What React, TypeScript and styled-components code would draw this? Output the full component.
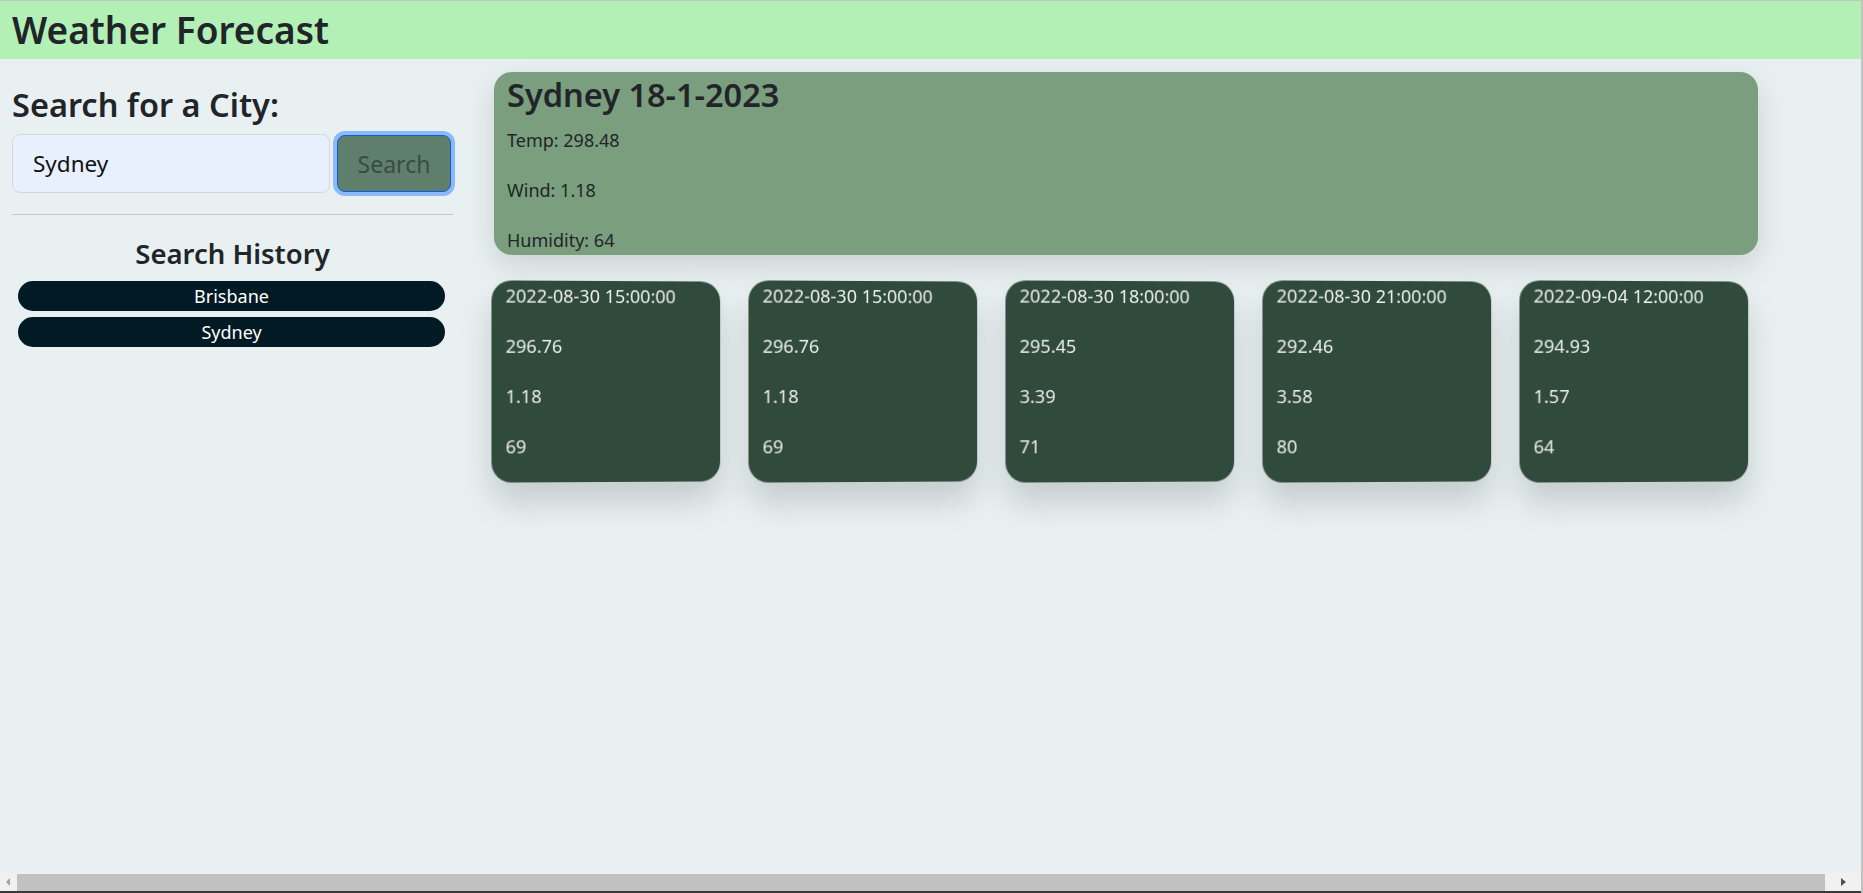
import React from "react";
import styled, { createGlobalStyle } from "styled-components";

const GlobalStyle = createGlobalStyle`
  * { box-sizing: border-box; }
  html, body { margin: 0; padding: 0; }
  body {
    background: #e8f0f1;
    font-family: "Noto Sans", "Open Sans", sans-serif;
    color: #212529;
    overflow: hidden;
  }
`;

const Page = styled.div`
  height: 893px;
  border-top: 1px solid #c4c4c4;
  border-right: 2px solid #c2c2c2;
  position: relative;
`;

const Header = styled.header`
  background: #b2f0b5;
  height: 58px;
  display: flex;
  align-items: center;
  padding-left: 12px;
`;

const Title = styled.h1`
  margin: 0;
  font-size: 37px;
  font-weight: 600;
  line-height: 1.2;
  color: #212529;
`;

const Row = styled.div`
  display: flex;
  align-items: flex-start;
  padding: 0 12px;
`;

const Sidebar = styled.aside`
  width: 441px;
  flex: none;
  display: flex;
  flex-direction: column;
`;

const SearchLabel = styled.h2`
  margin: 27px 0 10px;
  font-size: 32.5px;
  font-weight: 600;
  line-height: 38px;
`;

const SearchForm = styled.form`
  display: flex;
  align-items: center;
  gap: 7px;
`;

const CityInput = styled.input`
  width: 318px;
  height: 59px;
  border: 1px solid #d3d8dd;
  border-radius: 8px;
  background: #e8f0fe;
  padding: 0 20px;
  font-family: inherit;
  font-size: 22.5px;
  color: #111;
  outline: none;
`;

const SearchButton = styled.button`
  width: 114px;
  height: 57px;
  border: 1px solid #0b5ed7;
  border-radius: 8px;
  background: #5f7f6c;
  box-shadow: 0 0 0 4px #8cb9f7;
  color: #394b48;
  font-family: inherit;
  font-size: 23px;
  padding: 0;
`;

const Divider = styled.hr`
  width: 100%;
  margin: 21px 0 0;
  border: 0;
  border-top: 1px solid #c2c7c9;
`;

const HistoryTitle = styled.h3`
  margin: 22px 0 11px;
  text-align: center;
  font-size: 27.5px;
  font-weight: 600;
  line-height: 33px;
`;

const HistoryList = styled.div`
  display: flex;
  flex-direction: column;
  gap: 6px;
  padding: 0 8px 0 6px;
`;

const HistoryButton = styled.button`
  height: 30px;
  border: 0;
  border-radius: 15px;
  background: #011a24;
  color: #ffffff;
  font-family: inherit;
  font-size: 18px;
  line-height: 30px;
  padding: 0;
`;

const Main = styled.main`
  margin-left: 41px;
  padding-top: 13px;
  display: flex;
  flex-direction: column;
`;

const CurrentCard = styled.section`
  width: 1264px;
  border-radius: 18px;
  background: #7a9e7e;
  padding: 0 13px;
  box-shadow: 0 10px 30px rgba(0, 0, 0, 0.13);
`;

const CityHeading = styled.h2`
  margin: 4px 0 12px;
  font-size: 32.5px;
  font-weight: 600;
  line-height: 38px;
`;

const Stat = styled.p<{ $light?: boolean }>`
  margin: 0 0 21px;
  font-size: 18px;
  line-height: 29px;
  color: ${(p) => (p.$light ? "#eceeec" : "#212529")};
  &:last-child {
    margin-bottom: ${(p) => (p.$light ? "21px" : "0")};
  }
`;

const ForecastRow = styled.div`
  display: flex;
  gap: 28px;
  margin-top: 26px;
  margin-left: -2px;
`;

const ForecastCard = styled.article`
  width: 229px;
  border-radius: 20px;
  background: #304a3c;
  padding: 1px 14px 0;
  box-shadow: 0 20px 32px rgba(0, 0, 0, 0.15);
  transform: perspective(1000px) rotateY(3deg);
`;

const ScrollBar = styled.div`
  position: fixed;
  left: 0;
  right: 2px;
  bottom: 0;
  height: 20px;
  background: #f1f1f1;
  border-bottom: 2px solid #3a3a3a;
  display: flex;
  align-items: stretch;
`;

const ScrollArrow = styled.div<{ $wide?: boolean }>`
  width: ${(p) => (p.$wide ? "36px" : "17px")};
  flex: none;
  display: flex;
  align-items: center;
  justify-content: center;
`;

const ScrollThumb = styled.div`
  flex: 1;
  background: #c1c1c1;
  margin: 1px 0 0;
`;

const forecasts = [
  { date: "2022-08-30 15:00:00", temp: "296.76", wind: "1.18", hum: "69" },
  { date: "2022-08-30 15:00:00", temp: "296.76", wind: "1.18", hum: "69" },
  { date: "2022-08-30 18:00:00", temp: "295.45", wind: "3.39", hum: "71" },
  { date: "2022-08-30 21:00:00", temp: "292.46", wind: "3.58", hum: "80" },
  { date: "2022-09-04 12:00:00", temp: "294.93", wind: "1.57", hum: "64" },
];

export default function App() {
  return (
    <>
      <GlobalStyle />
      <Page>
        <Header>
          <Title>Weather Forecast</Title>
        </Header>
        <Row>
          <Sidebar>
            <SearchLabel>Search for a City:</SearchLabel>
            <SearchForm onSubmit={(e) => e.preventDefault()}>
              <CityInput defaultValue="Sydney" />
              <SearchButton type="submit">Search</SearchButton>
            </SearchForm>
            <Divider />
            <HistoryTitle>Search History</HistoryTitle>
            <HistoryList>
              <HistoryButton>Brisbane</HistoryButton>
              <HistoryButton>Sydney</HistoryButton>
            </HistoryList>
          </Sidebar>
          <Main>
            <CurrentCard>
              <CityHeading>Sydney 18-1-2023</CityHeading>
              <Stat>Temp: 298.48</Stat>
              <Stat>Wind: 1.18</Stat>
              <Stat>Humidity: 64</Stat>
            </CurrentCard>
            <ForecastRow>
              {forecasts.map((f, i) => (
                <ForecastCard key={i}>
                  <Stat $light>{f.date}</Stat>
                  <Stat $light>{f.temp}</Stat>
                  <Stat $light>{f.wind}</Stat>
                  <Stat $light>{f.hum}</Stat>
                </ForecastCard>
              ))}
            </ForecastRow>
          </Main>
        </Row>
        <ScrollBar>
          <ScrollArrow>
            <svg width="5" height="8" viewBox="0 0 5 8">
              <polygon points="4,0 0,4 4,8" fill="#a3a3a3" />
            </svg>
          </ScrollArrow>
          <ScrollThumb />
          <ScrollArrow $wide>
            <svg width="5" height="8" viewBox="0 0 5 8">
              <polygon points="0,0 5,4 0,8" fill="#505050" />
            </svg>
          </ScrollArrow>
        </ScrollBar>
      </Page>
    </>
  );
}
